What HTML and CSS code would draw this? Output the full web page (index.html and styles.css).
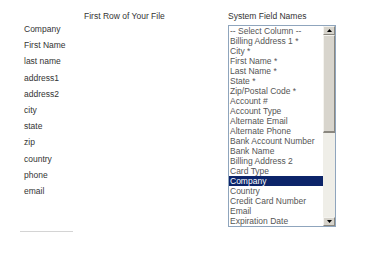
FILE: index.html
```html
<!DOCTYPE html>
<html>
<head>
<meta charset="utf-8">
<link rel="stylesheet" href="styles.css">
</head>
<body>
<div class="page">
  <div class="labels">
    <div class="label">Company</div>
    <div class="label">First Name</div>
    <div class="label">last name</div>
    <div class="label">address1</div>
    <div class="label">address2</div>
    <div class="label">city</div>
    <div class="label">state</div>
    <div class="label">zip</div>
    <div class="label">country</div>
    <div class="label">phone</div>
    <div class="label">email</div>
  </div>
  <div class="col-first">
    <div class="head">First Row of Your File</div>
  </div>
  <div class="col-system">
    <div class="head">System Field Names</div>
    <div class="listbox" role="listbox">
      <div class="options">
        <div class="opt">-- Select Column --</div>
        <div class="opt">Billing Address 1 *</div>
        <div class="opt">City *</div>
        <div class="opt">First Name *</div>
        <div class="opt">Last Name *</div>
        <div class="opt">State *</div>
        <div class="opt">Zip/Postal Code *</div>
        <div class="opt">Account #</div>
        <div class="opt">Account Type</div>
        <div class="opt">Alternate Email</div>
        <div class="opt">Alternate Phone</div>
        <div class="opt">Bank Account Number</div>
        <div class="opt">Bank Name</div>
        <div class="opt">Billing Address 2</div>
        <div class="opt">Card Type</div>
        <div class="opt selected">Company</div>
        <div class="opt">Country</div>
        <div class="opt">Credit Card Number</div>
        <div class="opt">Email</div>
        <div class="opt">Expiration Date</div>
      </div>
      <div class="scrollbar">
        <div class="sb-btn"><svg width="5" height="3" viewBox="0 0 5 3"><path d="M0 3 L2.5 0 L5 3 Z" fill="#000"/></svg></div>
        <div class="sb-thumb"></div>
        <div class="sb-track"></div>
        <div class="sb-btn"><svg width="5" height="3" viewBox="0 0 5 3"><path d="M0 0 L5 0 L2.5 3 Z" fill="#000"/></svg></div>
      </div>
    </div>
  </div>
</div>
<div class="rule"></div>
</body>
</html>
```

FILE: styles.css
```css
html, body {
  margin: 0;
  padding: 0;
  background: #fff;
}
body {
  font-family: "Liberation Sans", Arial, sans-serif;
  font-size: 8.5px;
  color: #333;
}
.page {
  display: flex;
  padding-left: 24px;
}
.labels {
  width: 60px;
  padding-top: 21px;
}
.label {
  height: 16.2px;
  line-height: 16.2px;
  color: #333;
}
.col-first {
  width: 144px;
  padding-top: 11px;
}
.head {
  height: 14px;
  line-height: 10px;
  color: #333;
}
.col-system {
  padding-top: 11px;
}
.listbox {
  display: flex;
  width: 106px;
  height: 200px;
  border: 1px solid #8fa5bd;
  background: #fff;
}
.options {
  flex: 1;
  overflow: hidden;
}
.opt {
  height: 10px;
  line-height: 10px;
  padding-left: 1px;
  color: #555;
  white-space: nowrap;
}
.opt.selected {
  background: #0c2469;
  color: #fff;
}
.scrollbar {
  width: 12px;
  display: flex;
  flex-direction: column;
  background: #efeee8;
}
.sb-btn {
  height: 9px;
  box-sizing: border-box;
  background: #d6d3cb;
  border-top: 1px solid #f4f3ef;
  border-left: 1px solid #f4f3ef;
  border-right: 1px solid #8a877f;
  border-bottom: 1px solid #8a877f;
  display: flex;
  align-items: center;
  justify-content: center;
}
.sb-btn svg {
  display: block;
}
.sb-thumb {
  height: 98px;
  box-sizing: border-box;
  background: #d8d5cd;
  border-top: 1px solid #f4f3ef;
  border-left: 1px solid #f4f3ef;
  border-right: 1px solid #8a877f;
  border-bottom: 2px solid #8a877f;
}
.sb-track {
  flex: 1;
}
.rule {
  margin: 4px 0 0 20px;
  width: 53px;
  height: 1px;
  background: #d4d4d4;
}
```
